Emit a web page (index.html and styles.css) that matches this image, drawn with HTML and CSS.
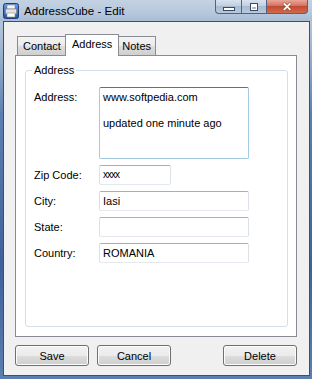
FILE: index.html
```html
<!DOCTYPE html>
<html lang="en">
<head>
	<meta charset="UTF-8">
	<title>AddressCube - Edit</title>
	<link rel="stylesheet" href="styles.css">
</head>
<body>
	<div class="window">
		<div class="titlebar">
			<svg class="app-icon" width="16" height="16" viewBox="0 0 16 16">
				<defs>
					<linearGradient id="ig" x1="0" y1="0" x2="0" y2="1">
						<stop offset="0" stop-color="#6d9be0"/>
						<stop offset="1" stop-color="#1f4fa8"/>
					</linearGradient>
				</defs>
				<rect x="0.5" y="0.5" width="15" height="15" rx="2" fill="url(#ig)" stroke="#1b3d7a"/>
				<rect x="4" y="2" width="8" height="4" fill="#f4f4f4" stroke="#8a8a8a" stroke-width="0.6"/>
				<rect x="2.5" y="6" width="11" height="5" fill="#e2e2e2" stroke="#7a7a7a" stroke-width="0.6"/>
				<rect x="4" y="10" width="8" height="4" fill="#ffffff" stroke="#8a8a8a" stroke-width="0.6"/>
			</svg>
			<span class="title">AddressCube - Edit</span>
			<div class="caption">
				<span class="cap cap-min"><i></i></span>
				<span class="cap cap-max"><i></i></span>
				<span class="cap cap-close">&#x2715;</span>
			</div>
		</div>

		<div class="client">
			<div class="tabs">
				<span class="tab">Contact</span>
				<span class="tab active">Address</span>
				<span class="tab">Notes</span>
			</div>

			<div class="tab-page">
				<fieldset class="group">
					<legend>Address</legend>
					<div class="form">
						<label class="lbl lbl-top">Address:</label>
						<div class="box area">www.softpedia.com<br><br>updated one minute ago</div>

						<label class="lbl">Zip Code:</label>
						<div class="box small">xxxx</div>

						<label class="lbl">City:</label>
						<div class="box">Iasi</div>

						<label class="lbl">State:</label>
						<div class="box"></div>

						<label class="lbl">Country:</label>
						<div class="box">ROMANIA</div>
					</div>
				</fieldset>
			</div>

			<div class="buttons">
				<button class="btn">Save</button>
				<button class="btn">Cancel</button>
				<span class="spacer"></span>
				<button class="btn">Delete</button>
			</div>
		</div>
	</div>
</body>
</html>
```

FILE: styles.css
```css
html,body{margin:0;padding:0;}
body{width:312px;height:379px;overflow:hidden;font-family:"Liberation Sans",Arial,sans-serif;font-size:11px;color:#000;}

.window{display:flex;flex-direction:column;width:312px;height:379px;background:linear-gradient(180deg,#bfcee0 0%,#a9bdd5 10%,#5e80b0 30%,#3d629a 70%,#5b7fb0 100%);}

/* title bar */
.titlebar{display:flex;align-items:flex-start;height:21px;padding:0 4px 0 3px;background:linear-gradient(180deg,#c3d2e3 0%,#b7c8dc 60%,#a8bcd4 100%);}
.app-icon{margin-top:3px;display:block;}
.title{margin:3px 0 0 5px;font-family:"Liberation Sans",Arial,sans-serif;font-size:11.6px;color:#000;line-height:15px;}
.caption{display:flex;margin-left:auto;margin-right:0;}
.cap{display:flex;align-items:center;justify-content:center;height:13px;border:1px solid #51637d;border-top:0;box-sizing:content-box;background:linear-gradient(180deg,#d9e2ee 0%,#c1cfe0 45%,#a9bbd2 50%,#b8c9dd 100%);}
.cap-min{width:25px;border-radius:0 0 0 4px;}
.cap-max{width:24px;border-left:0;}
.cap-close{width:40px;border-left:0;border-radius:0 0 4px 0;background:linear-gradient(180deg,#e7a699 0%,#d7705d 45%,#c34a32 50%,#d06a4f 100%);color:#fff;font-size:12px;font-weight:bold;line-height:12px;text-shadow:0 0 1px #333,0 0 1px #333;}
.cap-min i{display:block;width:10px;height:2px;margin-top:4px;background:#fff;border:1px solid #3a4a60;}
.cap-max i{display:block;width:6px;height:6px;border:1px solid #3a4a60;box-shadow:inset 0 0 0 1px #fff,inset 0 2px 0 1px #fff;margin-top:1px;}

/* client area */
.client{display:flex;flex-direction:column;flex:1;margin:0 2px 3px 3px;border:1px solid #3c4f6c;background:#f0f0f0;}

.tabs{display:flex;align-items:flex-end;height:21px;margin:12px 0 0 13px;position:relative;z-index:1;}
.tab{display:block;height:18px;padding:0 4px;line-height:19px;border:1px solid #898c95;border-bottom:0;background:linear-gradient(180deg,#f3f3f3 0%,#ebebeb 50%,#dddddd 51%,#cfcfcf 100%);margin-right:-1px;}
.tab:first-child{padding:0 5px;}
.tab.active{height:21px;margin:0 -1px -1px -1px;padding:0 6px 0 6px;background:#fff;line-height:19px;position:relative;}
.tab.active + .tab{padding:0 4px 0 3px;}

.tab-page{display:flex;flex-direction:column;height:282px;box-sizing:border-box;margin:0 12px 0 11px;padding:8px 8px 9px 9px;border:1px solid #898c95;background:#fff;}

.group{flex:1;margin:0;padding:10px 8px 0 6px;border:1px solid #d5dfe5;border-radius:3px;min-width:0;}
.group legend{padding:0 2px;line-height:13px;}

.form{display:grid;grid-template-columns:65px 150px;row-gap:6px;align-items:center;padding-left:2px;}
.lbl{line-height:13px;}
.lbl-top{align-self:start;padding-top:4px;}
.box{box-sizing:border-box;height:20px;padding:2px 3px;line-height:14px;border:1px solid #dbdfe6;border-top-color:#abadb3;border-bottom-color:#e3e9ef;border-radius:2px;background:#fff;white-space:nowrap;}
.box.area{height:72px;padding:3px 3px;line-height:13px;border-color:#a4c9e3;border-top-color:#3d7bad;}
.box.small{width:72px;letter-spacing:-1px;font-size:10px;}

/* buttons */
.buttons{display:flex;margin:8px 12px 0 11px;gap:8px;}
.spacer{flex:1;}
.btn{width:74px;height:21px;padding:0;font-family:"Liberation Sans",Arial,sans-serif;font-size:11px;color:#000;border:1px solid #707070;border-radius:3px;background:linear-gradient(180deg,#f2f2f2 0%,#ebebeb 50%,#dddddd 51%,#cfcfcf 100%);box-shadow:inset 0 0 0 1px #fcfcfc;}
```
